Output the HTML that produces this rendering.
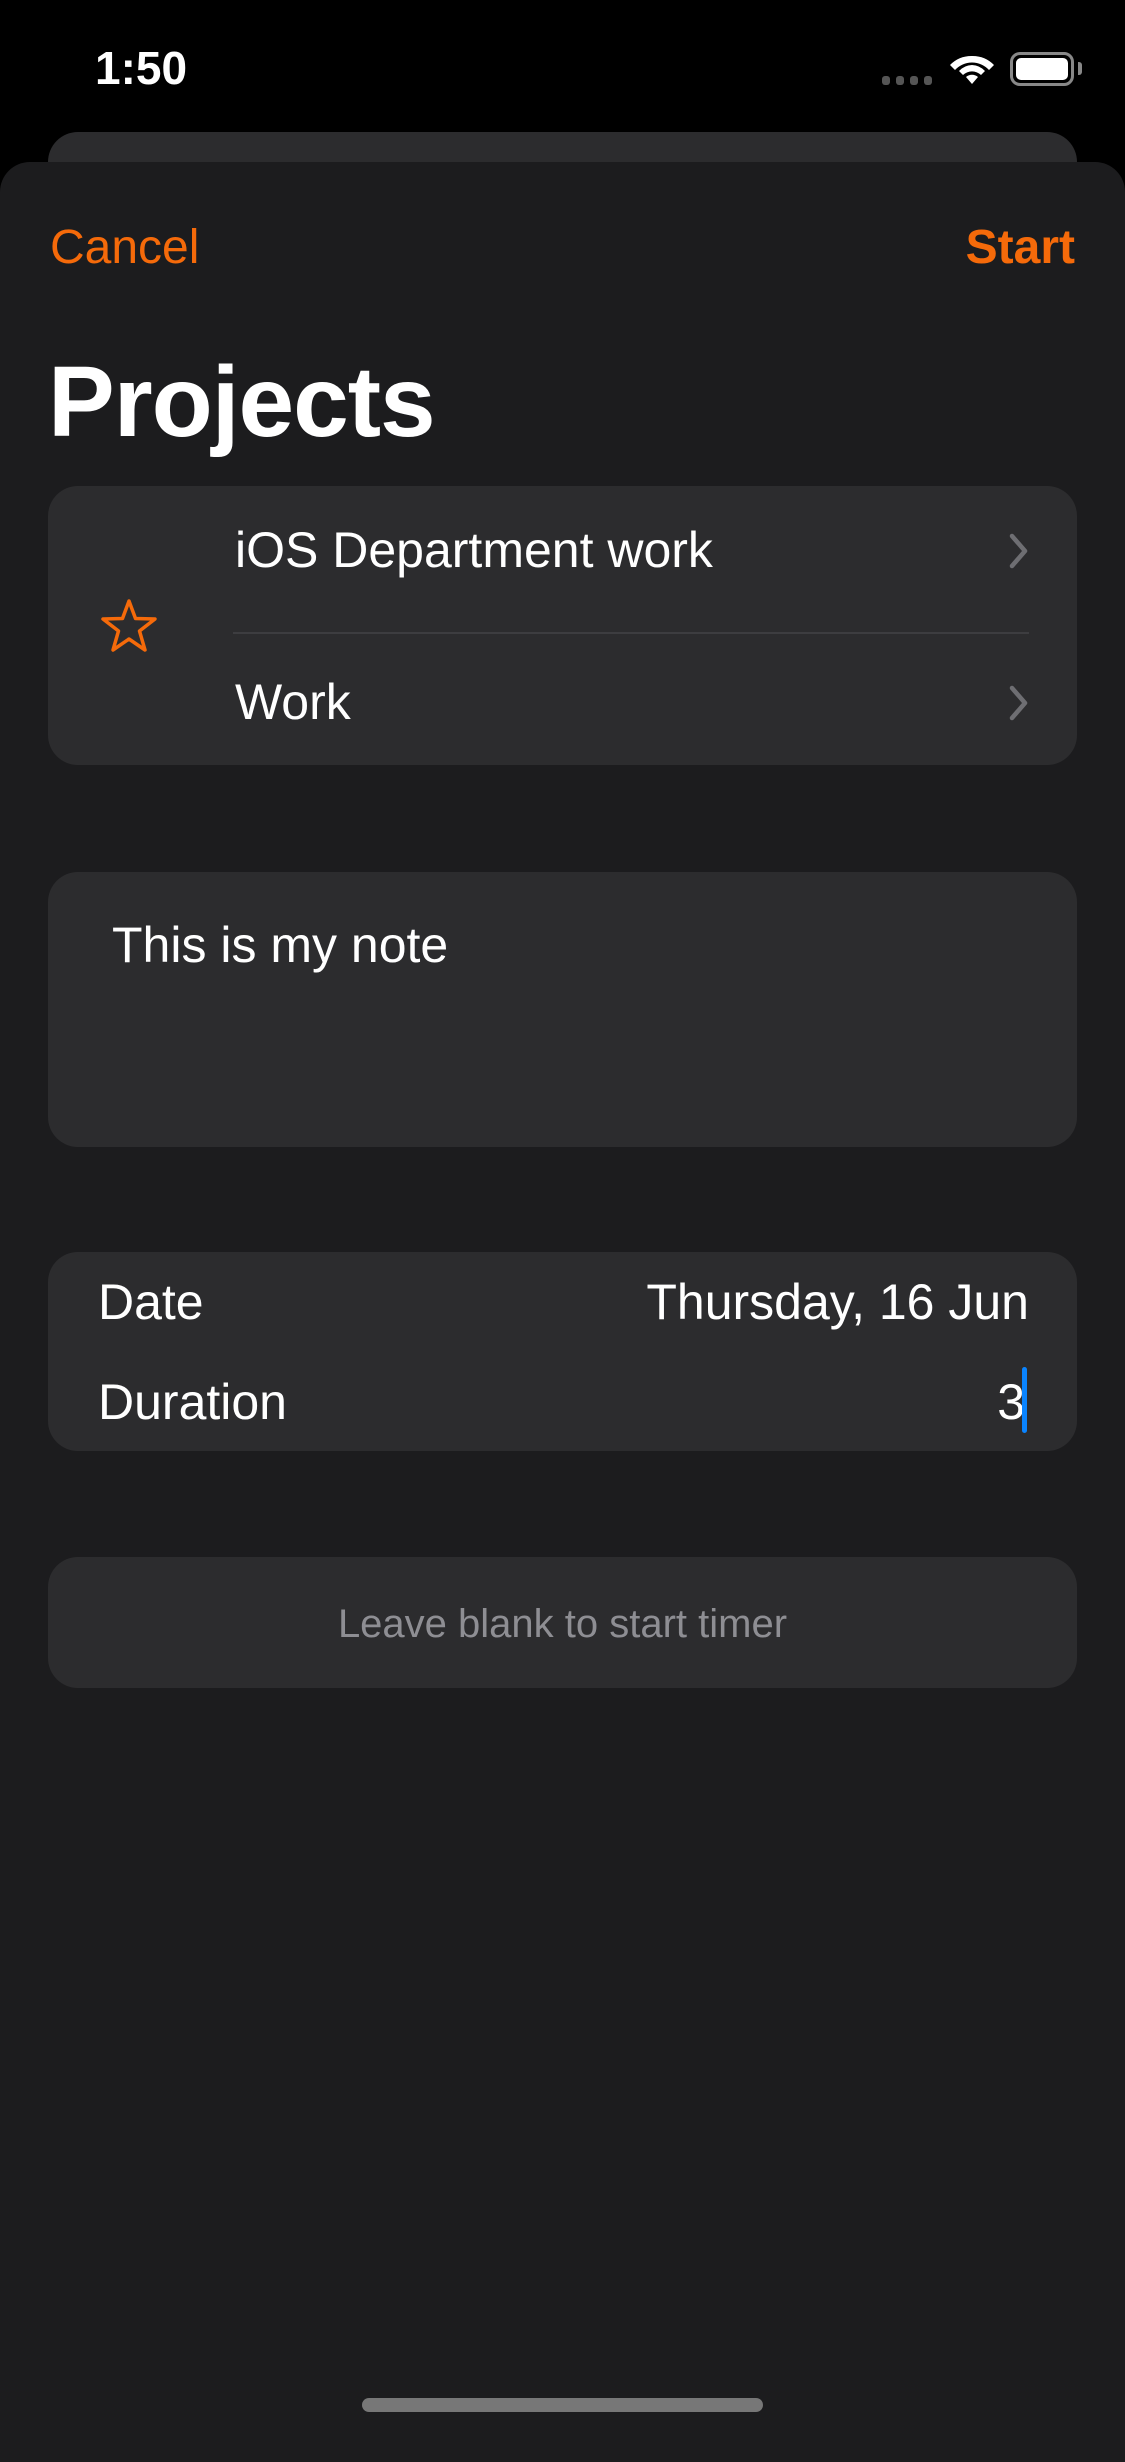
<!DOCTYPE html>
<html><head><meta charset="utf-8"><style>
*{margin:0;padding:0;box-sizing:border-box}
body{width:1125px;height:2436px;background:#000;position:relative;overflow:hidden;font-family:"Liberation Sans",sans-serif;color:#fff}
.a{position:absolute;white-space:nowrap}
.card{position:absolute;left:48px;width:1029px;background:#2c2c2e;border-radius:30px}
.t{font-size:50px;line-height:60px;height:60px}
</style></head><body>
<div class="a" style="left:95px;top:40px;font-size:46px;font-weight:bold;line-height:56px">1:50</div>
<div class="a" style="left:882px;top:76px;width:52px;height:9px">
<span style="position:absolute;left:0;width:8px;height:9px;border-radius:3px;background:#555"></span>
<span style="position:absolute;left:14px;width:8px;height:9px;border-radius:3px;background:#555"></span>
<span style="position:absolute;left:28px;width:8px;height:9px;border-radius:3px;background:#555"></span>
<span style="position:absolute;left:42px;width:8px;height:9px;border-radius:3px;background:#555"></span></div>
<svg class="a" style="left:948px;top:50px" width="48" height="36" viewBox="0 0 48 36"><path d="M24 34 L30 27 A9 9 0 0 0 18 27 Z M24 6 A30 30 0 0 1 46 15 L41 20 A23 23 0 0 0 7 20 L2 15 A30 30 0 0 1 24 6Z M24 15 A19 19 0 0 1 37 21 L33 25 A13 13 0 0 0 15 25 L11 21 A19 19 0 0 1 24 15Z" fill="#fff"/></svg>
<div class="a" style="left:1010px;top:52px;width:64px;height:34px;border:3px solid #888;border-radius:10px"><div style="position:absolute;left:3px;top:3px;right:3px;bottom:3px;background:#fff;border-radius:5px"></div></div>
<div class="a" style="left:1078px;top:62px;width:4px;height:13px;background:#888;border-radius:0 3px 3px 0"></div>
<div class="a" style="left:48px;top:132px;width:1029px;height:80px;background:#2c2c2e;border-radius:30px"></div>
<div class="a" style="left:0;top:162px;width:1125px;height:2300px;background:#1c1c1e;border-radius:30px 30px 0 0"></div>
<div class="a" style="left:50px;top:218px;font-size:48px;line-height:60px;color:#f56a0a">Cancel</div>
<div class="a" style="right:50px;top:218px;font-size:48px;line-height:60px;color:#f56a0a;font-weight:bold">Start</div>
<div class="a" style="left:48px;top:345px;font-size:100px;line-height:115px;font-weight:bold;letter-spacing:-1px">Projects</div>
<div class="card" style="top:486px;height:279px">
<svg class="a" style="left:52px;top:112px" width="58" height="56" viewBox="0 0 58 56"><path d="M29 3 L35.5 20.5 L55 21 L39.5 33 L45 52 L29 41 L13 52 L18.5 33 L3 21 L22.5 20.5 Z" fill="none" stroke="#f56a0a" stroke-width="3.5" stroke-linejoin="round"/></svg>
<div class="a t" style="left:187px;top:34px">iOS Department work</div>
<div class="a" style="left:185px;top:146px;width:796px;height:2px;background:#3d3d40"></div>
<div class="a t" style="left:187px;top:186px">Work</div>
<svg class="a" style="left:960px;top:46px" width="22" height="38" viewBox="0 0 22 38"><path d="M4 4 L17 19 L4 34" fill="none" stroke="#6e6e72" stroke-width="4.5" stroke-linecap="round" stroke-linejoin="round"/></svg>
<svg class="a" style="left:960px;top:198px" width="22" height="38" viewBox="0 0 22 38"><path d="M4 4 L17 19 L4 34" fill="none" stroke="#6e6e72" stroke-width="4.5" stroke-linecap="round" stroke-linejoin="round"/></svg>
</div>
<div class="card" style="top:872px;height:275px">
<div class="a t" style="left:64px;top:43px">This is my note</div></div>
<div class="card" style="top:1252px;height:199px">
<div class="a t" style="left:50px;top:20px">Date</div>
<div class="a t" style="right:48px;top:20px">Thursday, 16 Jun</div>
<div class="a t" style="left:50px;top:120px">Duration</div>
<div class="a t" style="right:52px;top:120px">3</div>
<div class="a" style="left:974px;top:115px;width:5px;height:66px;background:#0a84ff;border-radius:3px"></div>
</div>
<div class="card" style="top:1557px;height:131px">
<div class="a" style="left:0;width:1029px;text-align:center;top:42px;font-size:40px;line-height:50px;color:#8e8e93">Leave blank to start timer</div></div>
<div class="a" style="left:362px;top:2398px;width:401px;height:14px;background:#777;border-radius:7px"></div>
</body></html>
